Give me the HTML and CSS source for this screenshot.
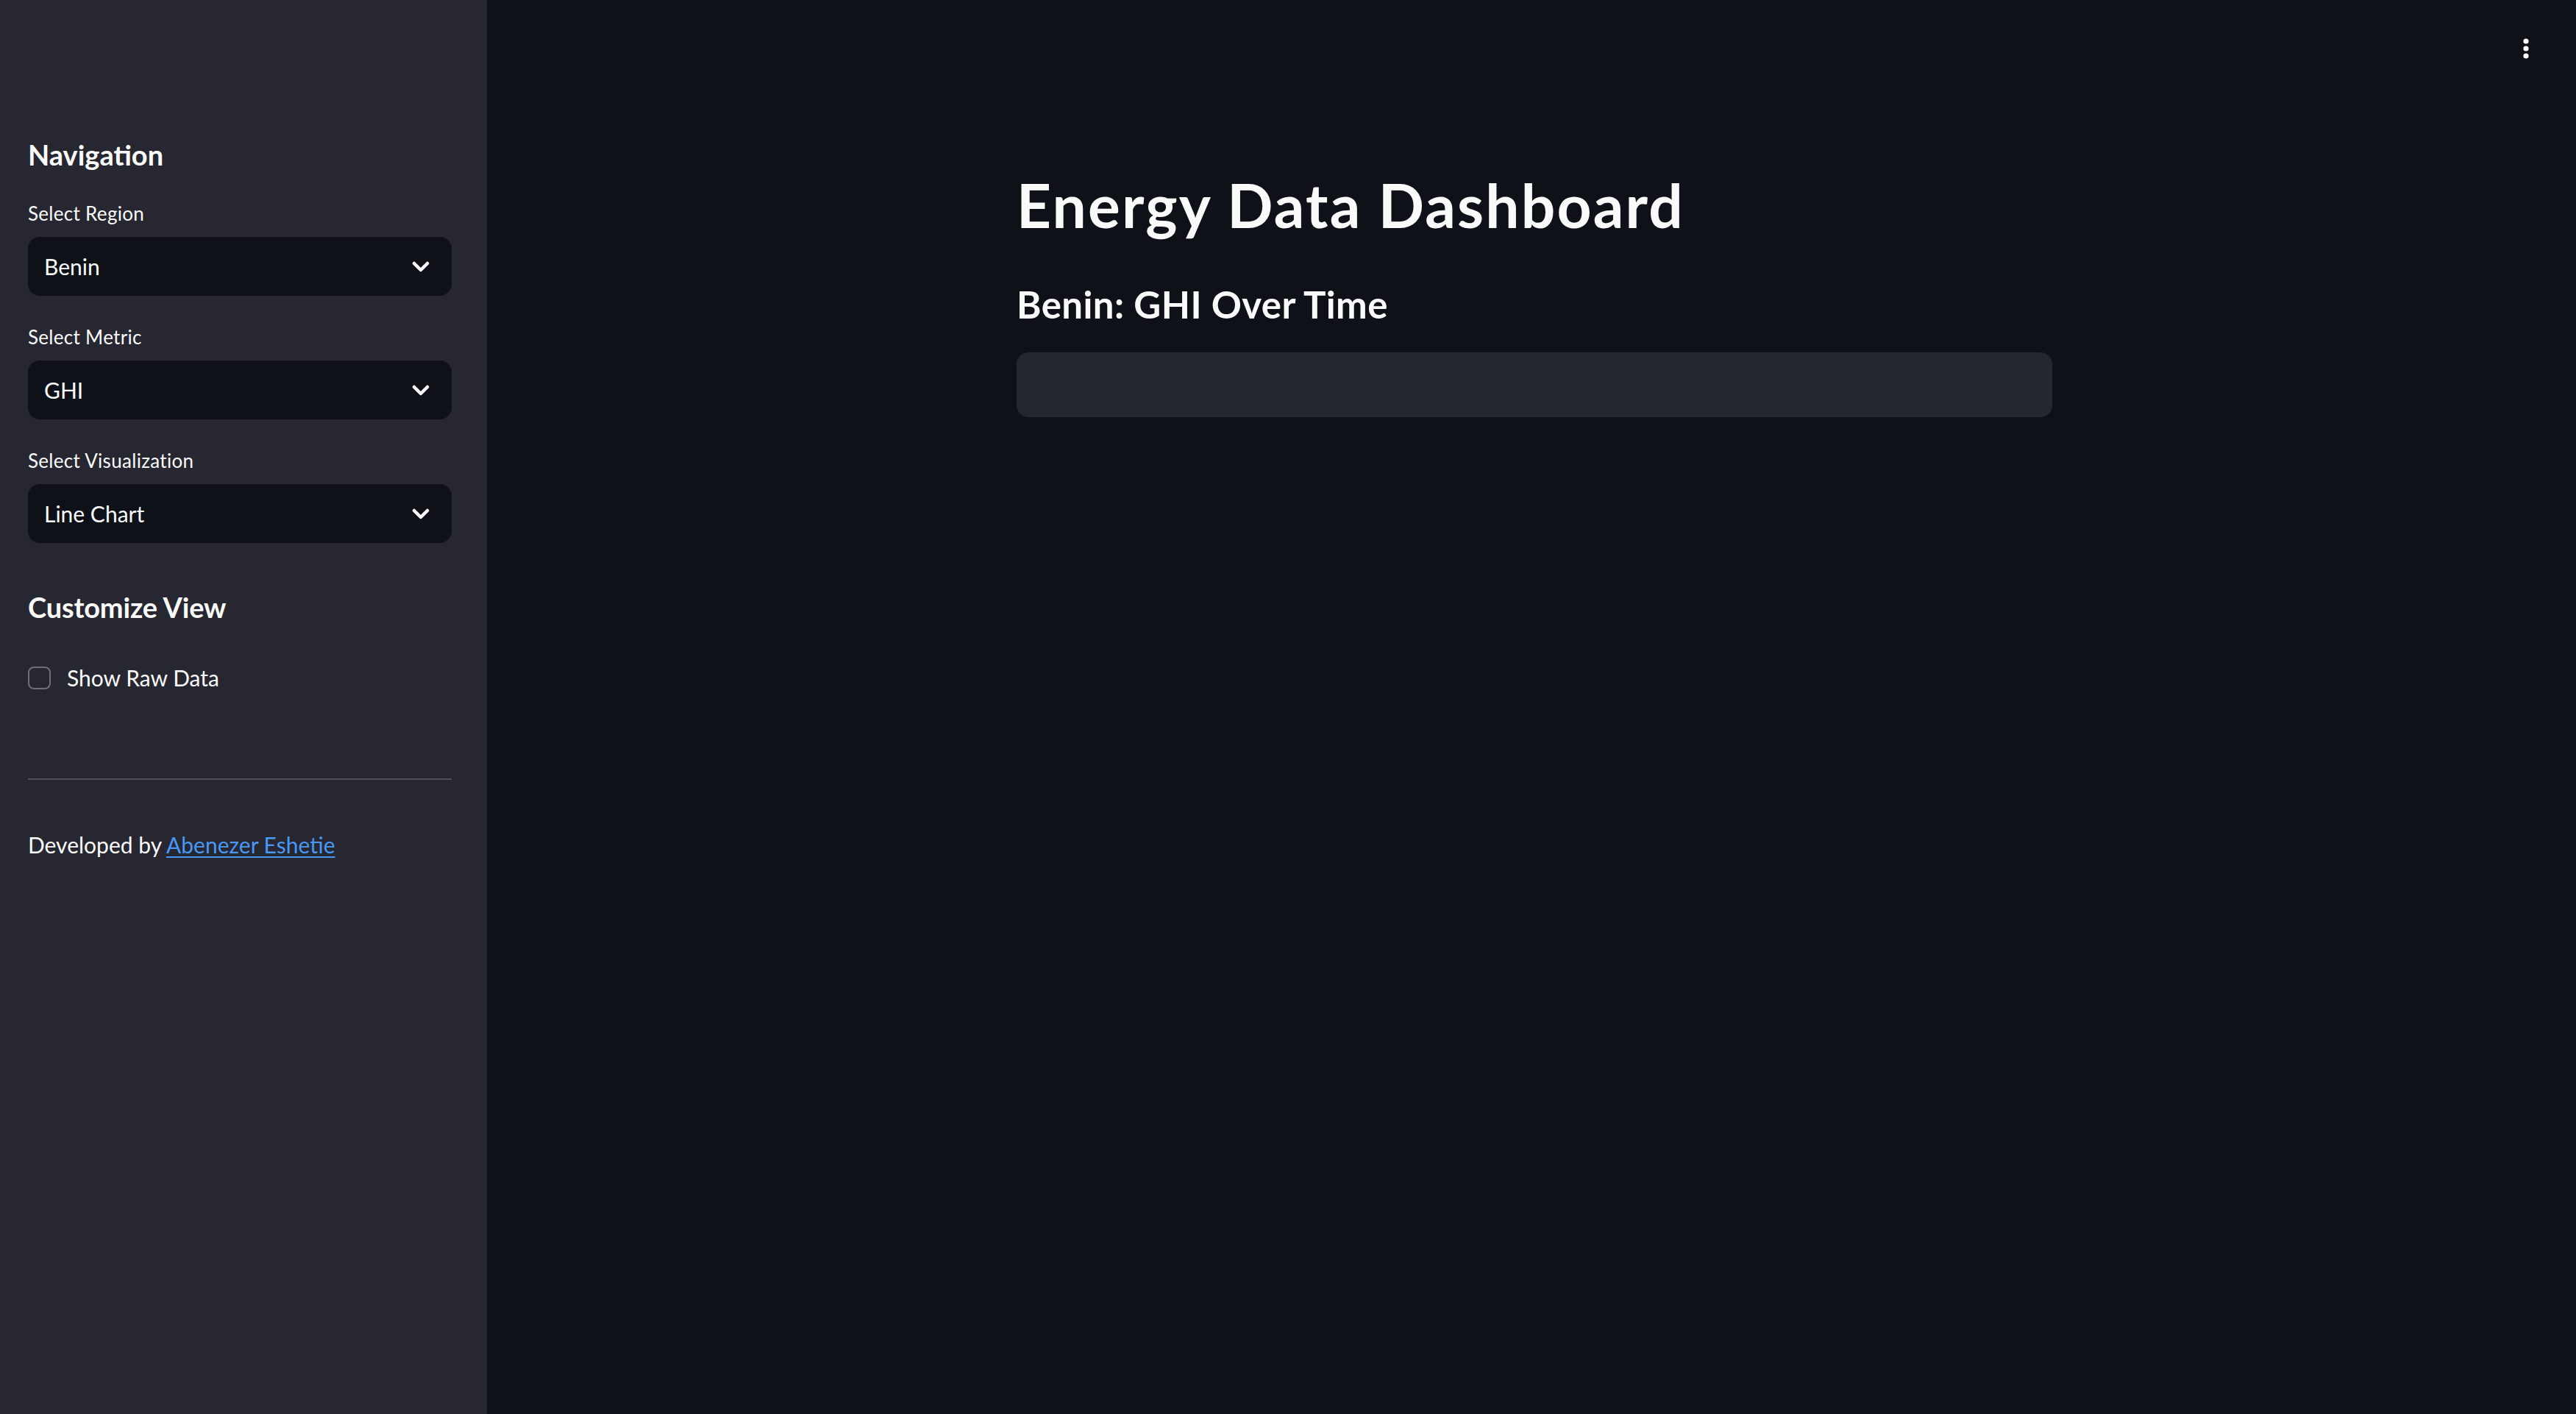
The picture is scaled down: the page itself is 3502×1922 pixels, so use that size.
FILE: index.html
```html
<!DOCTYPE html>
<html lang="en">
<head>
<meta charset="utf-8">
<title>Energy Data Dashboard</title>
<link rel="stylesheet" href="styles.css">
</head>
<body>
<div class="app">
  <aside class="sidebar">
    <h2 class="side-heading first">Navigation</h2>
    <div class="field">
      <label class="field-label">Select Region</label>
      <div class="select">
        <span class="select-value">Benin</span>
        <svg class="chevron" width="24" height="16" viewBox="0 0 24 16"><polyline points="3,3 12,12 21,3" fill="none" stroke="#fafafa" stroke-width="4.5" stroke-linecap="round" stroke-linejoin="round"/></svg>
      </div>
    </div>
    <div class="field">
      <label class="field-label">Select Metric</label>
      <div class="select">
        <span class="select-value">GHI</span>
        <svg class="chevron" width="24" height="16" viewBox="0 0 24 16"><polyline points="3,3 12,12 21,3" fill="none" stroke="#fafafa" stroke-width="4.5" stroke-linecap="round" stroke-linejoin="round"/></svg>
      </div>
    </div>
    <div class="field">
      <label class="field-label">Select Visualization</label>
      <div class="select">
        <span class="select-value">Line Chart</span>
        <svg class="chevron" width="24" height="16" viewBox="0 0 24 16"><polyline points="3,3 12,12 21,3" fill="none" stroke="#fafafa" stroke-width="4.5" stroke-linecap="round" stroke-linejoin="round"/></svg>
      </div>
    </div>
    <h2 class="side-heading second">Customize View</h2>
    <div class="check-row">
      <span class="checkbox"></span>
      <span class="check-label">Show Raw Data</span>
    </div>
    <hr class="divider">
    <p class="credit">Developed by <a href="#" class="credit-link">Abenezer Eshetie</a></p>
  </aside>
  <main class="main">
    <div class="toolbar">
      <svg width="12" height="34" viewBox="0 0 12 34"><circle cx="6" cy="6" r="3.6" fill="#fafafa"/><circle cx="6" cy="16" r="3.6" fill="#fafafa"/><circle cx="6" cy="26" r="3.6" fill="#fafafa"/></svg>
    </div>
    <div class="block">
      <h1 class="title">Energy Data Dashboard</h1>
      <h3 class="subtitle">Benin: GHI Over Time</h3>
      <div class="placeholder"></div>
    </div>
  </main>
</div>
</body>
</html>
```
FILE: styles.css
```css
* { box-sizing: border-box; }
html, body {
  margin: 0;
  padding: 0;
  height: 100%;
  background: #0e1117;
  color: #fafafa;
  font-family: Lato, "Noto Sans", sans-serif;
}
.app {
  display: flex;
  width: 3502px;
  height: 1922px;
  overflow: hidden;
}
.sidebar {
  width: 662px;
  flex: 0 0 662px;
  background: #262730;
  padding: 187px 48px 0 38px;
  display: flex;
  flex-direction: column;
}
.side-heading {
  margin: 0;
  font-size: 38px;
  line-height: 46px;
  height: 46px;
  font-weight: 700;
  color: #fafafa;
}
.side-heading.second { margin-top: 64px; letter-spacing: -0.2px; }
.field {
  display: flex;
  flex-direction: column;
  margin-top: 40px;
}
.field:first-of-type { margin-top: 41px; }
.field-label {
  font-size: 26px;
  line-height: 32px;
  height: 32px;
  color: #fafafa;
  margin-bottom: 16px;
  letter-spacing: 0.3px;
}
.select {
  height: 80px;
  width: 576px;
  background: #0e1117;
  border-radius: 16px;
  display: flex;
  align-items: center;
  justify-content: space-between;
  padding: 0 30px 0 22px;
}
.select-value {
  font-size: 30px;
  line-height: 80px;
}
.chevron { display: block; margin-top: 2px; }
.check-row {
  display: flex;
  align-items: center;
  margin-top: 53px;
  height: 40px;
}
.checkbox {
  width: 31px;
  height: 31px;
  border: 2.5px solid #6e6f78;
  border-radius: 8px;
  margin-right: 22px;
}
.check-label {
  font-size: 30px;
  line-height: 40px;
}
.divider {
  width: 576px;
  margin: 117px 0 0 0;
  border: none;
  height: 2px;
  background: #4f505a;
}
.credit {
  margin: 68px 0 0 0;
  font-size: 30px;
  line-height: 40px;
}
.credit-link {
  color: #4a98f5;
  text-decoration: underline;
  text-decoration-thickness: 2px;
  text-underline-offset: 4px;
}
.main {
  flex: 1;
  position: relative;
  display: flex;
  justify-content: center;
  padding-left: 8px;
}
.toolbar {
  position: absolute;
  top: 50px;
  right: 62px;
}
.toolbar svg { display: block; }
.block {
  width: 1408px;
  padding-top: 230px;
}
.title {
  margin: 0;
  font-size: 82px;
  line-height: 97px;
  font-weight: 700;
  letter-spacing: 2.2px;
}
.subtitle {
  margin: 56px 0 0 0;
  font-size: 51px;
  line-height: 61px;
  font-weight: 700;
  letter-spacing: 0.4px;
}
.placeholder {
  margin-top: 35px;
  height: 88px;
  background: #25272e;
  border-radius: 16px;
}
```
